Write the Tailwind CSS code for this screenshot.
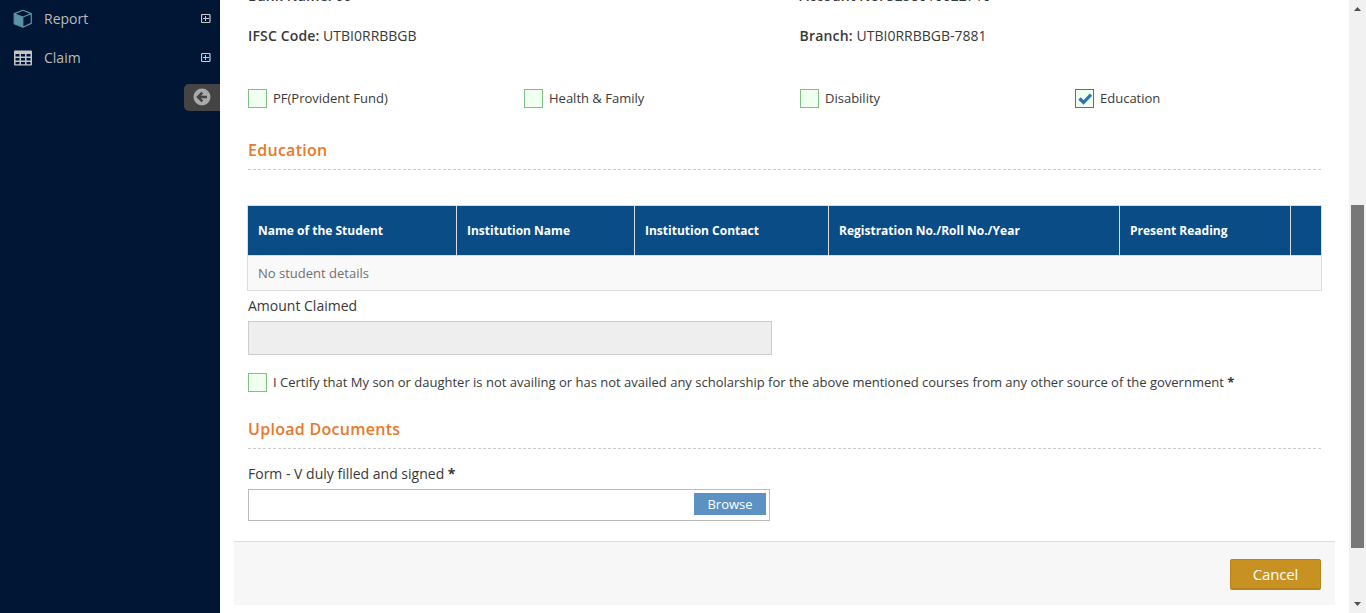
<!DOCTYPE html>
<html lang="en"><head><meta charset="utf-8"><title>Claim</title>
<script src="https://cdn.jsdelivr.net/npm/@tailwindcss/browser@4"></script></head>
<body class="flex h-[613px] w-[1366px] overflow-hidden bg-white font-['Open_Sans',sans-serif] text-[14px] leading-5 text-[#393939]">
<aside class="flex w-[220px] shrink-0 flex-col bg-[#011634] text-[#bbbbbb]">
  <a class="flex h-[38px] items-center pl-[13px] pr-[9px]">
    <svg class="h-5 w-5" viewBox="0 0 20 20"><path d="M1.5 5.2 9.8 8v10L1.5 14.6Z" fill="#5d93a8"/><path d="M1.2 4.6 10 1.3l8.3 3.3v9.8L9.8 18.2 1.2 14.6ZM1.2 4.8 9.8 8l8.5-3.3M9.8 8v10" fill="none" stroke="#5d93a8" stroke-width="1.2" stroke-linejoin="round"/></svg>
    <span class="ml-[11px] flex-1">Report</span>
    <svg class="h-[10px] w-[10px]" viewBox="0 0 10 10" fill="none" stroke="#ccc"><rect x=".5" y=".5" width="8.500" height="8" rx="1" stroke-width="1.200"/><path d="M2 4.5h6M4.500 2v5"/></svg>
  </a>
  <a class="mt-px flex h-[38px] items-center pl-[13px] pr-[9px]">
    <svg class="h-5 w-5" viewBox="0 0 20 20"><path fill="#c5c5c5" fill-rule="evenodd" d="M2 2.500h16a1 1 0 0 1 1 1V16.500a1 1 0 0 1-1 1H2a1 1 0 0 1-1-1V3.500a1 1 0 0 1 1-1ZM2.500 6v2.500h4V6Zm5.500 0v2.500h4V6Zm5.500 0v2.500h4V6Zm-11 4v2.500h4V10Zm5.500 0v2.500h4V10Zm5.500 0v2.500h4V10Zm-11 4v2.200h4V14Zm5.500 0v2.200h4V14Zm5.500 0v2.200h4V14Z"/></svg>
    <span class="ml-[11px] flex-1">Claim</span>
    <svg class="h-[10px] w-[10px]" viewBox="0 0 10 10" fill="none" stroke="#ccc"><rect x=".5" y=".5" width="8.500" height="8" rx="1" stroke-width="1.200"/><path d="M2 4.5h6M4.500 2v5"/></svg>
  </a>
  <button class="mt-[7px] flex h-[27px] w-9 items-center self-end rounded-l-[5px] bg-[#444] pb-px pl-[9px]">
    <svg class="h-[18px] w-[18px]" viewBox="0 0 18 18"><circle cx="9" cy="9" r="8.500" fill="#aaa"/><path d="M14 9H5M9.300 4.700 5 9l4.300 4.300" fill="none" stroke="#444" stroke-width="2.500"/></svg>
  </button>
</aside>
<main class="flex min-w-0 flex-1 flex-col px-[14px]">
  <section class="flex h-[541px] shrink-0 flex-col pl-[14px] pr-[14px]">
    <div class="-mt-[14px] grid grid-cols-[551.5px_1fr] gap-y-5">
      <p><b class="font-semibold tracking-[0.15px]">Bank Name:</b> 00</p><p><b class="font-semibold tracking-[0.15px]">Account No:</b> 3258010022710</p>
      <p><b class="font-semibold tracking-[0.15px]">IFSC Code:</b> UTBI0RRBBGB</p><p><b class="font-semibold tracking-[0.2px]">Branch:</b> UTBI0RRBBGB-7881</p>
    </div>
    <div class="mt-[43px] grid grid-cols-[276px_276px_275px_1fr] text-[13px]">
      <label class="flex h-[19px] items-center gap-[6px]"><i class="h-[19px] w-[19px] border border-[#7fc180] bg-[#f0fff0]"></i><span class="-mt-[2px]">PF(Provident Fund)</span></label>
      <label class="flex h-[19px] items-center gap-[6px]"><i class="h-[19px] w-[19px] border border-[#7fc180] bg-[#f0fff0]"></i><span class="-mt-[2px]">Health &amp; Family</span></label>
      <label class="flex h-[19px] items-center gap-[6px]"><i class="h-[19px] w-[19px] border border-[#7fc180] bg-[#f0fff0]"></i><span class="-mt-[2px]">Disability</span></label>
      <label class="flex h-[19px] items-center gap-[6px]"><i class="h-[19px] w-[19px] border border-[#337ab7] bg-[#f0fff0]"><svg class="h-[17px] w-[17px]" viewBox="0 0 17 17"><path d="m3.500 8.500 4 4 7.500-7.800" fill="none" stroke="#2e74b3" stroke-width="3.200"/></svg></i><span class="-mt-[2px]">Education</span></label>
    </div>
    <h4 class="mt-8 h-[29px] text-base leading-5 font-semibold tracking-[0.28px] text-[#e9782a]">Education</h4>
    <svg class="h-px w-full shrink-0"><path d="M0 .5H1073" stroke="#ccc" stroke-dasharray="3 2"/></svg>
    <table class="mt-[35px] -ml-px w-[1075px] shrink-0 table-fixed border-collapse border border-[#ddd] text-left">
      <colgroup><col class="w-[209px]"><col class="w-[178px]"><col class="w-[194px]"><col class="w-[291px]"><col class="w-[171px]"><col class="w-[31px]"></colgroup>
      <thead><tr class="h-[50px] bg-[#0a4c86] text-[12px] font-bold text-white"><th class="border border-[#ddd] px-[10px]">Name of the Student</th><th class="border border-[#ddd] px-[10px]">Institution Name</th><th class="border border-[#ddd] px-[10px]">Institution Contact</th><th class="border border-[#ddd] px-[10px]">Registration No./Roll No./Year</th><th class="border border-[#ddd] px-[10px]">Present Reading</th><th class="border border-[#ddd]"></th></tr></thead>
      <tbody><tr class="h-[35px] bg-[#f9f9f9] text-[13px] text-[#707070]"><td colspan="6" class="px-[10px]">No student details</td></tr></tbody>
    </table>
    <label class="mt-[5px] h-5">Amount Claimed</label>
    <div class="mt-[5px] h-[34px] w-[524px] shrink-0 border border-[#ccc] bg-[#eee]"></div>
    <label class="mt-[18px] flex h-[19px] items-center gap-[6px] text-[13px]"><i class="h-[19px] w-[19px] border border-[#7fc180] bg-[#f0fff0]"></i><span class="-mt-[2px]">I Certify that My son or daughter is not availing or has not availed any scholarship for the above mentioned courses from any other source of the government <b>*</b></span></label>
    <h4 class="mt-[27px] h-[29px] text-base leading-5 font-semibold tracking-[0.28px] text-[#e9782a]">Upload Documents</h4>
    <svg class="h-px w-full shrink-0"><path d="M0 .5H1073" stroke="#ccc" stroke-dasharray="3 2"/></svg>
    <label class="mt-[15px] h-5">Form - V duly filled and signed <b>*</b></label>
    <div class="mt-[5px] flex h-8 w-[522px] shrink-0 items-start justify-end border border-[#bbb] p-[3px]"><button class="h-[22px] w-[72px] bg-[#5b92c3] text-[13px] leading-[22px] text-white">Browse</button></div>
  </section>
  <footer class="flex h-[64px] w-[1101px] shrink-0 items-start justify-end border-t border-[#ddd] bg-[#f7f7f7] pt-[17px] pr-[14px]">
    <button class="h-[31px] w-[91px] rounded-[2px] border border-[#b5851c] border-b-2 bg-[#c89222] text-[15px] leading-[28px] tracking-[-0.15px] text-white">Cancel</button>
  </footer>
</main>
<div class="flex w-[17px] shrink-0 flex-col items-center bg-[#f1f1f1]">
  <svg class="h-[17px] w-[17px] shrink-0" viewBox="0 0 17 17"><path d="M5 11h7L8.500 7Z" fill="#505050"/></svg>
  <div class="mt-[188px] h-[343px] w-[13px] bg-[#787878]"></div>
  <svg class="mt-auto h-[17px] w-[17px] shrink-0" viewBox="0 0 17 17"><path d="M5 6h7l-3.500 4Z" fill="#505050"/></svg>
</div>
</body></html>
